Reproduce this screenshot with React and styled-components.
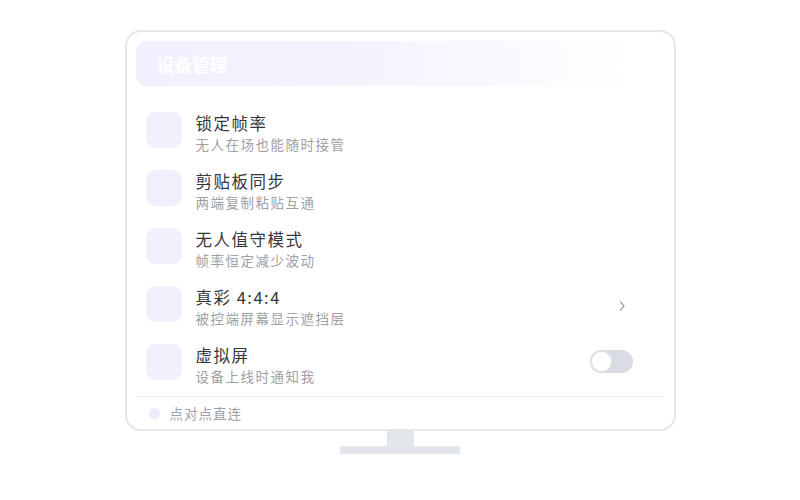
// 设备管理 - 显示器样式卡片

import styled, { createGlobalStyle } from "styled-components";

const rows = [
    { title: "锁定帧率", desc: "无人在场也能随时接管" },
    { title: "剪贴板同步", desc: "两端复制粘贴互通" },
    { title: "无人值守模式", desc: "帧率恒定减少波动" },
    { title: "真彩 4:4:4", desc: "被控端屏幕显示遮挡层", action: "chevron" },
    { title: "虚拟屏", desc: "设备上线时通知我", action: "toggle" },
];

export default function App(){
    return(
        <Page>
            <GlobalStyle />
            <Monitor>
                <Header>
                    <HeaderTitle>设备管理</HeaderTitle>
                    <HeaderExtra>在线</HeaderExtra>
                </Header>
                <List>
                    {rows.map((row)=>(
                        <Row key={row.title}>
                            <IconBox />
                            <TextBlock>
                                <Title>{row.title}</Title>
                                <Desc>{row.desc}</Desc>
                            </TextBlock>
                            {row.action === "chevron" && (
                                <Chevron width="8" height="12" viewBox="0 0 8 12">
                                    <path d="M2.5 2 L6 6 L2.5 10" fill="none" stroke="#9ca3af" strokeWidth="1.3" strokeLinecap="round" strokeLinejoin="round" />
                                </Chevron>
                            )}
                            {row.action === "toggle" && (
                                <Toggle><Knob /></Toggle>
                            )}
                        </Row>
                    ))}
                </List>
                <Footer>
                    <Dot />
                    <FooterText>点对点直连</FooterText>
                </Footer>
            </Monitor>
            <Neck />
            <Base />
        </Page>
    )
}

const GlobalStyle = createGlobalStyle`
    html, body {
        margin: 0;
        padding: 0;
        background: #ffffff;
    }
    body {
        font-family: "Noto Sans CJK SC", "Noto Sans", sans-serif;
    }
`;

const Page = styled.div`
    width: 800px;
    height: 500px;
    display: flex;
    flex-direction: column;
    align-items: center;
    padding-top: 30px;
    box-sizing: border-box;
`;

const Monitor = styled.div`
    width: 551px;
    height: 401px;
    box-sizing: border-box;
    border: 2px solid #e3e6eb;
    border-radius: 16px;
    background: #ffffff;
    padding: 9px 10px 0 9px;
    display: flex;
    flex-direction: column;
`;

const Header = styled.div`
    height: 45px;
    border-radius: 10px;
    background: linear-gradient(90deg, #f3effe 0%, #f5f2fe 40%, #fbfaff 75%, #ffffff 95%);
    display: flex;
    align-items: center;
    justify-content: space-between;
    padding: 0 18px 0 21px;
`;

const HeaderTitle = styled.div`
    color: #ffffff;
    font-size: 18px;
    font-weight: 700;
    letter-spacing: -0.3px;
`;

const HeaderExtra = styled.div`
    color: #ffffff;
    font-size: 18px;
    font-weight: 700;
`;

const List = styled.div`
    display: flex;
    flex-direction: column;
    padding-top: 17px;
`;

const Row = styled.div`
    height: 58px;
    display: flex;
    align-items: flex-start;
    padding: 9px 33px 0 10px;
    box-sizing: border-box;
`;

const IconBox = styled.div`
    width: 36px;
    height: 36px;
    border-radius: 9px;
    background: #f3f0fe;
    flex-shrink: 0;
`;

const TextBlock = styled.div`
    flex: 1;
    margin-left: 14px;
    display: flex;
    flex-direction: column;
`;

const Title = styled.div`
    font-size: 16.5px;
    line-height: 22px;
    letter-spacing: 1.5px;
    color: #35373b;
`;

const Desc = styled.div`
    font-size: 13.5px;
    line-height: 20px;
    letter-spacing: 1.5px;
    color: #9da1a8;
`;

const Chevron = styled.svg`
    margin-top: 14px;
    margin-right: 5px;
`;

const Toggle = styled.div`
    width: 43px;
    height: 23px;
    margin-top: 6px;
    margin-right: -2px;
    border-radius: 12px;
    background: #d9dce2;
    position: relative;
`;

const Knob = styled.div`
    position: absolute;
    left: 1px;
    top: 1px;
    width: 19px;
    height: 19px;
    border-radius: 50%;
    background: #ffffff;
    border: 1px solid #e4e6ea;
`;

const Footer = styled.div`
    margin-top: 3px;
    border-top: 1px solid #eceef1;
    height: 32px;
    display: flex;
    align-items: center;
    padding-left: 13px;
`;

const Dot = styled.div`
    width: 11px;
    height: 11px;
    border-radius: 50%;
    background: #efeafe;
`;

const FooterText = styled.div`
    margin-left: 10px;
    font-size: 13.5px;
    letter-spacing: 1px;
    color: #9da1a8;
`;

const Neck = styled.div`
    width: 27px;
    height: 15px;
    background: #e3e6eb;
`;

const Base = styled.div`
    width: 120px;
    height: 8px;
    background: #e3e6eb;
`;
